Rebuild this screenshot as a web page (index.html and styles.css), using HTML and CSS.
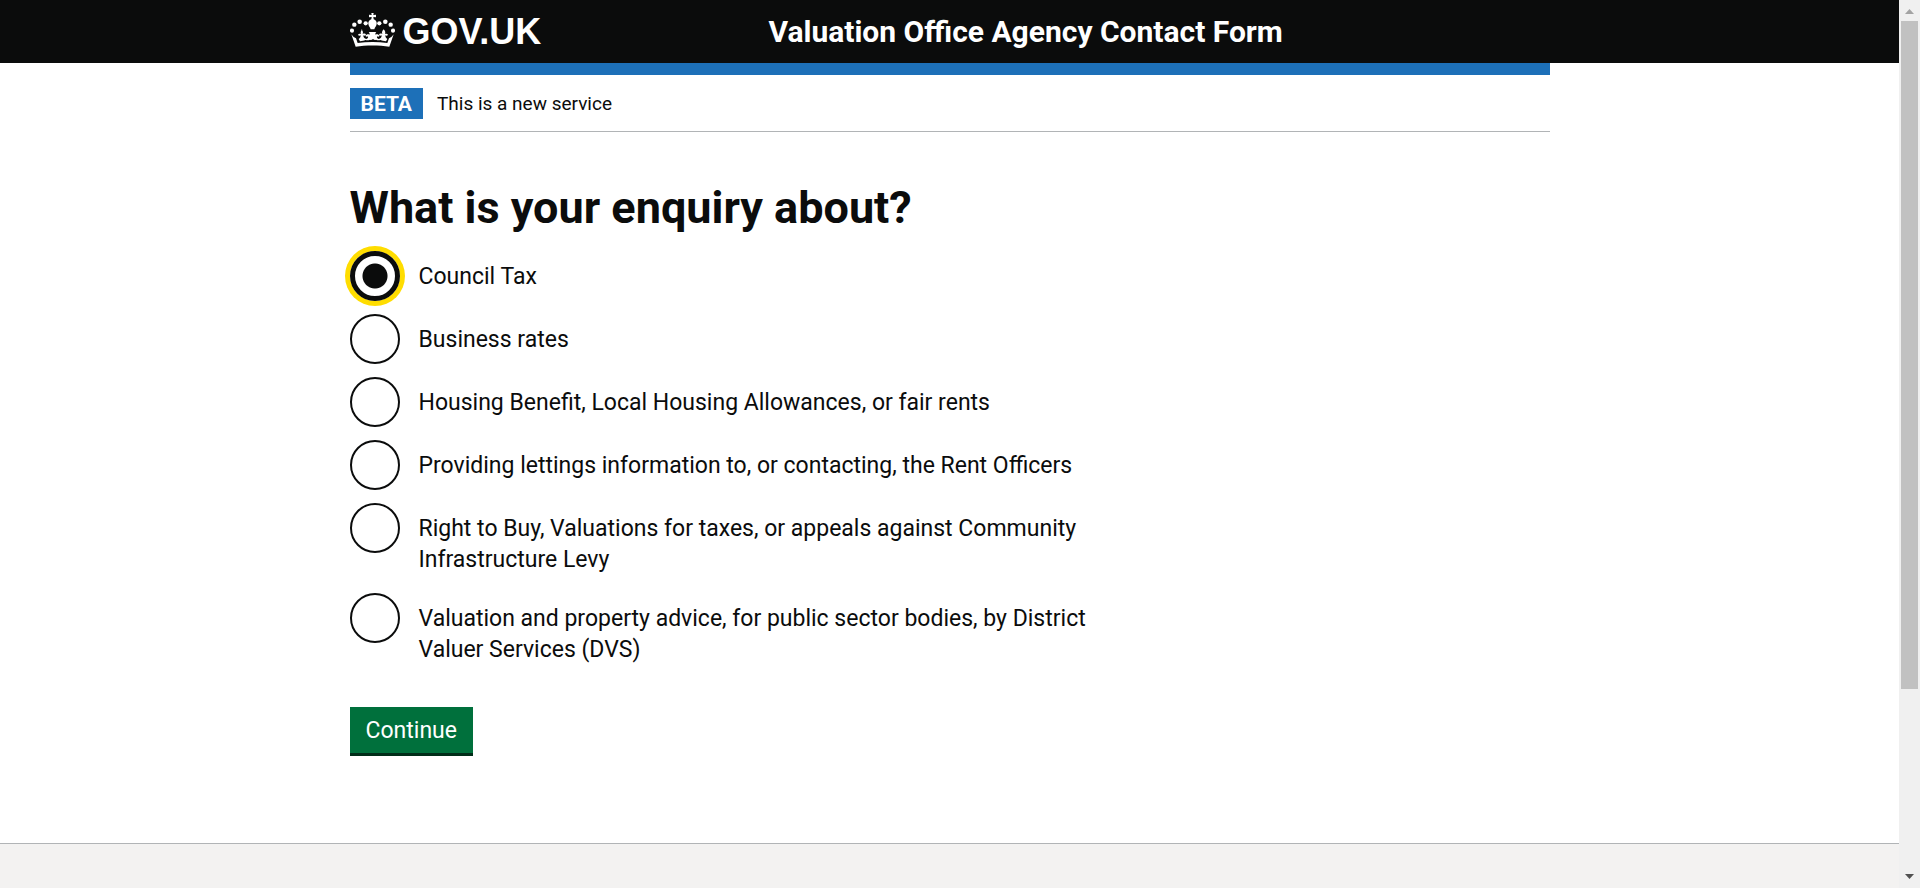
FILE: index.html
```html
<!DOCTYPE html>
<html lang="en">
<head>
<meta charset="utf-8">
<meta name="viewport" content="width=device-width, initial-scale=1">
<title>What is your enquiry about?</title>
<link rel="stylesheet" href="styles.css">
</head>
<body>
<div class="page">
  <header class="header">
    <div class="container header-inner">
      <a class="logo" href="#">
        <svg class="crown" viewBox="0 0 135 102" aria-hidden="true" fill="currentColor">
          <circle cx="6" cy="53" r="6.2"/><circle cx="13" cy="35" r="6.6"/><circle cx="29" cy="26" r="6.8"/><circle cx="47" cy="31" r="6.4"/>
          <circle cx="129" cy="53" r="6.2"/><circle cx="122" cy="35" r="6.6"/><circle cx="106" cy="26" r="6.8"/><circle cx="88" cy="31" r="6.4"/>
          <path d="M64 0h7l-1 6 8-1v8l-8-1 1 7c7 3 10 8 9 14-1 7-5 9-7 16h-11c-2-7-6-9-7-16-1-6 2-11 9-14l1-7-8 1V5l8 1z"/>
          <path d="M4 64c4 6 8 10 14 12l5 14c28-4 61-4 89 0l5-14c6-2 10-6 14-12l-13 37c-30-5-71-5-101 0z"/>
          <path d="M34 49c5 6 6 9 4 14 4-2 8-2 10 1-1 4-5 5-8 3 0 7 3 10 9 11 4-1 6-4 5-8-3 2-6 1-8-2 3-4 8-6 13-3 0-4-1-6-3-8h23c-2 2-3 4-3 8 5-3 10-1 13 3-2 3-5 4-8 2-1 4 1 7 5 8 6-1 9-4 9-11-3 2-7 1-8-3 2-3 6-3 10-1-2-5-1-8 4-14 5 6 6 9 4 14 4-2 7-1 9 2-1 3-5 4-8 2 0 5 2 9 6 11l-4 7c-7-1-12-2-16-4-5 1-10 1-14-1-3 2-5 1-9-2-4 3-6 4-9 2-4 2-9 2-14 1-4 2-9 3-16 4l-4-7c4-2 6-6 6-11-3 2-7 1-8-2 2-3 5-4 9-2-2-5-1-8 4-14z"/>
        </svg>
        <span>GOV.UK</span>
      </a>
      <a class="service" href="#">Valuation Office Agency Contact Form</a>
    </div>
  </header>
  <div class="container">
    <div class="bar"></div>
    <div class="phase">
      <strong class="tag">BETA</strong>
      <span class="phase-text">This is a new service</span>
    </div>
    <main>
      <form class="form">
        <fieldset class="fieldset">
          <legend class="legend"><h1 class="title">What is your enquiry about?</h1></legend>
          <div class="options">
            <label class="option"><input class="radio" type="radio" name="enquiry" checked><span class="text">Council Tax</span></label>
            <label class="option"><input class="radio" type="radio" name="enquiry"><span class="text">Business rates</span></label>
            <label class="option"><input class="radio" type="radio" name="enquiry"><span class="text">Housing Benefit, Local Housing Allowances, or fair rents</span></label>
            <label class="option"><input class="radio" type="radio" name="enquiry"><span class="text">Providing lettings information to, or contacting, the Rent Officers</span></label>
            <label class="option"><input class="radio" type="radio" name="enquiry"><span class="text">Right to Buy, Valuations for taxes, or appeals against Community Infrastructure Levy</span></label>
            <label class="option"><input class="radio" type="radio" name="enquiry"><span class="text">Valuation and property advice, for public sector bodies, by District Valuer Services (DVS)</span></label>
          </div>
        </fieldset>
        <button class="button" type="submit">Continue</button>
      </form>
    </main>
  </div>
  <footer class="footer"></footer>
</div>
<div class="scroll" aria-hidden="true">
  <svg class="arrow" viewBox="0 0 21 21"><path d="M6 14h9l-4.500-5z" fill="#a3a3a3"/></svg>
  <div class="track"><div class="thumb"></div></div>
  <svg class="arrow" viewBox="0 0 21 21"><path d="M6 7h9l-4.500 5z" fill="#505050"/></svg>
</div>
</body>
</html>
```
FILE: styles.css
```css
* { box-sizing: border-box; }

body {
  margin: 0;
  display: grid;
  grid-template-columns: 1fr 21px;
  min-height: 100vh;
  background: #fff;
  color: #0b0c0c;
  font-family: Roboto, "Liberation Sans", sans-serif;
  font-size: 23px;
  line-height: 31px;
}

.page { display: flex; flex-direction: column; }

.container {
  width: 100%;
  max-width: 1200px;
  margin: 0 auto;
}

.header { background: #0b0c0c; color: #fff; }
.header-inner {
  display: grid;
  grid-template-columns: 419px 1fr;
  align-items: center;
  height: 63px;
}
.header a { color: inherit; text-decoration: none; }
.logo {
  display: flex;
  align-items: center;
  gap: 8px;
  font-family: "Liberation Sans", sans-serif;
  font-size: 36px;
  font-weight: 700;
}
.crown { width: 45px; height: 38px; padding-bottom: 4px; }
.service { font-size: 30px; font-weight: 700; }

.bar { height: 12px; background: #1d70b8; }
.phase {
  display: flex;
  align-items: center;
  gap: 14px;
  padding: 13px 0 12px;
  border-bottom: 1px solid #b1b4b6;
  font-size: 19px;
}
.phase-text { padding-top: 1px; line-height: 30px; }
.tag {
  padding: 1px 11px 0;
  background: #1d70b8;
  color: #fff;
  font-size: 21px;
  line-height: 30px;
}

.form { padding: 51px 0 90px; }
.fieldset { margin: 0; padding: 0; border: 0; }
.legend { padding: 0; }
.title { margin: 0; font-size: 45px; line-height: 50px; }
.options {
  display: grid;
  gap: 13px;
  max-width: 760px;
  padding: 18px 0 37px;
}
.option { display: flex; gap: 19px; }
.radio {
  appearance: none;
  flex: none;
  width: 50px;
  height: 50px;
  margin: 0;
  border: 2px solid #0b0c0c;
  border-radius: 50%;
}
.radio:checked {
  border-width: 5px;
  background: radial-gradient(circle, #0b0c0c 12px, transparent 13px);
  box-shadow: 0 0 0 5px #fd0;
}
.text { padding: 10px 0 5px; }

.button {
  display: block;
  padding: 8px 16px 7px;
  border: 0;
  background: #00703c;
  box-shadow: 0 3px 0 #002d18;
  color: #fff;
  font: inherit;
}

.footer {
  flex: 1;
  min-height: 44px;
  border-top: 1px solid #b1b4b6;
  background: #f3f2f1;
}

.scroll { display: flex; flex-direction: column; background: #f0f0f0; }
.arrow { width: 21px; height: 21px; }
.track { flex: 1; padding: 0 2px; }
.thumb { height: 79%; background: #c1c1c1; }
```
